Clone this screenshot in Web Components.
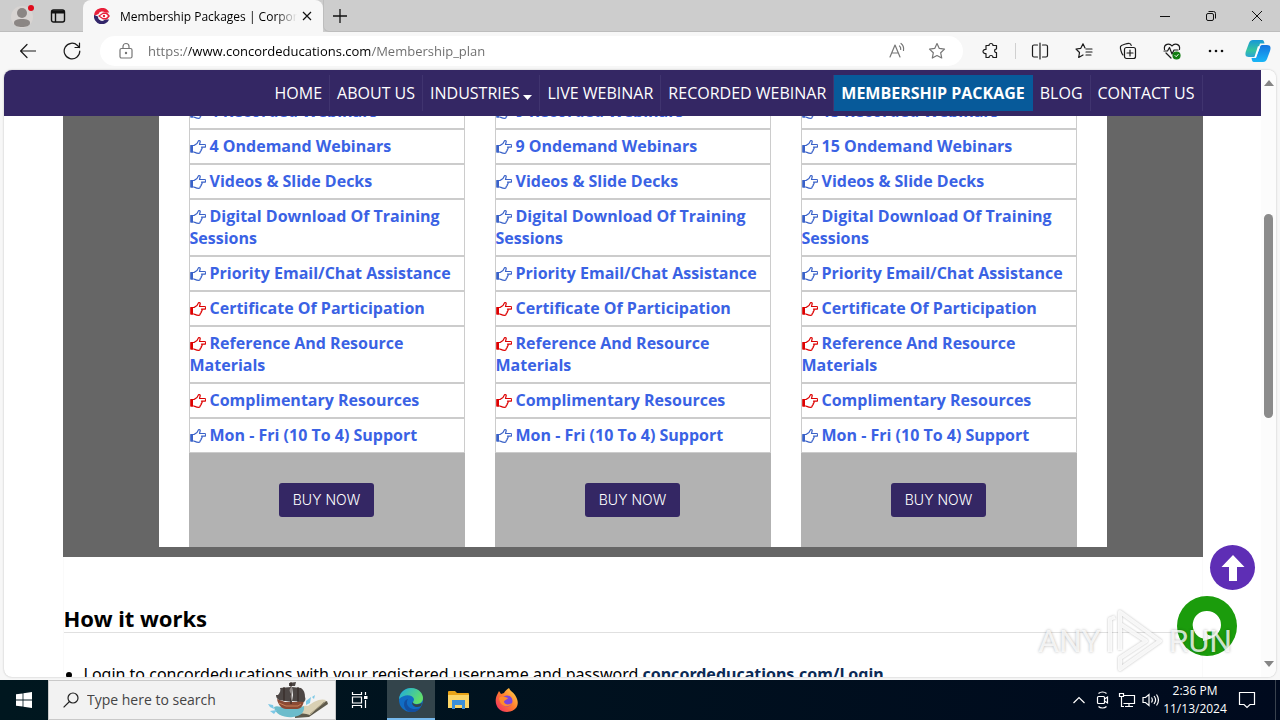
<!DOCTYPE html>
<html lang="en">
<head>
<meta charset="utf-8">
<title>Membership Packages | Corporate Training</title>
<style>
    body {
        margin: 0;
        font-family: "Open Sans", "Noto Sans", sans-serif;
        color: #000;
    }
</style>
</head>
<body>
<desktop-shell>
    <tab-strip slot="chrome">Membership Packages | Corporate Training</tab-strip>
    <address-bar slot="chrome" url="https://www.concordeducations.com/Membership_plan"></address-bar>
    <page-view slot="page">
        <site-nav slot="nav">
            <nav-item>HOME</nav-item>
            <nav-item>ABOUT US</nav-item>
            <nav-item caret>INDUSTRIES</nav-item>
            <nav-item>LIVE WEBINAR</nav-item>
            <nav-item>RECORDED WEBINAR</nav-item>
            <nav-item active>MEMBERSHIP PACKAGE</nav-item>
            <nav-item>BLOG</nav-item>
            <nav-item>CONTACT US</nav-item>
        </site-nav>
        <plan-board>
            <plan-card recorded="4" ondemand="4"></plan-card>
            <plan-card recorded="9" ondemand="9"></plan-card>
            <plan-card recorded="15" ondemand="15"></plan-card>
        </plan-board>
        <how-it-works></how-it-works>
        <any-run slot="float"></any-run>
        <float-actions slot="float"></float-actions>
    </page-view>
    <task-bar slot="taskbar"></task-bar>
</desktop-shell>

<script>
function define(name, html, setup) {
  const template = document.createElement("template");
  template.innerHTML = html;
  customElements.define(name, class extends HTMLElement {
    constructor() {
      super();
      this.attachShadow({ mode: "open" });
      this.shadowRoot.appendChild(template.content.cloneNode(true));
    }
    connectedCallback() {
      if (setup) setup(this, this.shadowRoot);
    }
  });
}

define("desktop-shell", `
<style>
    :host {
        display: flex;
        flex-direction: column;
        height: 100vh;
        overflow: hidden;
        background: #f7f7f7;
    }
    main {
        flex: 1;
        min-height: 0;
        display: flex;
        padding: 0 4px 3px;
    }
</style>
<slot name="chrome"></slot>
<main><slot name="page"></slot></main>
<slot name="taskbar"></slot>
`);

define("tab-strip", `
<style>
    :host {
        display: flex;
        height: 32px;
        background: #cdcdcd;
        font-size: 12px;
    }
    button {
        border: 0;
        padding: 0;
        background: none;
        display: grid;
        place-items: center;
    }
    svg {
        display: block;
        fill: none;
        stroke: #111;
    }
    .left {
        display: flex;
        align-items: center;
        width: 83px;
        gap: 14px;
        padding-left: 10px;
        box-sizing: border-box;
        border-bottom: 1px solid #bdbdbd;
    }
    .tab {
        display: flex;
        align-items: center;
        width: 240px;
        box-sizing: border-box;
        padding: 0 8px 0 11px;
        background: #f7f7f7;
        border-radius: 8px 8px 0 0;
    }
    .title {
        flex: 1;
        min-width: 0;
        margin: 0 2px 0 10px;
        overflow: hidden;
        white-space: nowrap;
        -webkit-mask-image: linear-gradient(90deg, #000 88%, transparent);
    }
    .rest {
        flex: 1;
        display: flex;
        padding-left: 6px;
        border-bottom: 1px solid #bdbdbd;
        border-left: 1px solid #bdbdbd;
        border-radius: 0 0 0 6px;
    }
    .rest .plus { width: 20px; }
    .windows {
        margin-left: auto;
        display: flex;
    }
    .windows button { width: 46px; }
</style>
<div class="left">
    <button aria-label="Profile">
        <svg width="26" height="28" viewBox="0 0 26 28" style="stroke:none">
            <circle cx="12" cy="15" r="11" fill="#d8d4d2"/>
            <circle cx="12" cy="11" r="5" fill="#8b8684"/>
            <path d="M4 21c0-3 3-4 8-4s8 1 8 4-4 4-8 4-8-1-8-4z" fill="#8b8684"/>
            <circle cx="21" cy="6" r="3" fill="#e00b1c"/>
        </svg>
    </button>
    <button aria-label="Tab actions">
        <svg width="16" height="16" viewBox="0 0 16 16" stroke-width="1.4">
            <rect x="1.5" y="2" width="13" height="12" rx="2"/>
            <path d="M2 4h12" stroke-width="3"/><path d="M5.5 5v9"/>
        </svg>
    </button>
</div>
<div class="tab">
    <svg width="16" height="16" viewBox="0 0 16 16" style="stroke:none">
        <path d="M0 8A8 8 0 0 1 15.200 4.500H11A4 4 0 0 0 4.500 6z" fill="#e8203a"/>
        <path d="M0 7l4 1.500a4 4 0 0 0 7 3h4.200A8 8 0 0 1 0 7z" fill="#32266a"/>
        <path d="M4 8l5-3.500h4l3 3.500-3 3.500H9z" fill="#e8203a"/>
        <path d="M6 8l3-2h3l2 2-2 2H9z" fill="#fff"/><circle cx="10" cy="8" r="1.200" fill="#e8203a"/>
    </svg>
    <span class="title"><slot></slot></span>
    <button aria-label="Close tab">
        <svg width="16" height="16" viewBox="0 0 16 16" stroke-width="1.2"><path d="M4 4l8 8M12 4l-8 8"/></svg>
    </button>
</div>
<div class="rest">
    <button class="plus" aria-label="New tab">
        <svg width="16" height="16" viewBox="0 0 16 16" stroke-width="1.3"><path d="M1 8h14M8 1v14"/></svg>
    </button>
    <div class="windows">
        <button aria-label="Minimize"><svg width="12" height="12" viewBox="0 0 12 12"><path d="M1 6.5h10"/></svg></button>
        <button aria-label="Restore"><svg width="12" height="12" viewBox="0 0 12 12"><rect x="1.5" y="3.5" width="7" height="7" rx="1.5"/><path d="M3.5 1.5h5a2 2 0 0 1 2 2v5"/></svg></button>
        <button aria-label="Close"><svg width="12" height="12" viewBox="0 0 12 12"><path d="M1 1l10 10M11 1L1 11"/></svg></button>
    </div>
</div>
`);

define("address-bar", `
<style>
    :host {
        display: flex;
        align-items: center;
        height: 38px;
        background: #f7f7f7;
    }
    button {
        border: 0;
        padding: 0;
        background: none;
        display: grid;
        place-items: center;
        width: 44px;
        height: 32px;
    }
    svg {
        display: block;
        fill: none;
        stroke: #1b1b1b;
        stroke-width: 1.2;
        stroke-linejoin: round;
        stroke-linecap: round;
    }
    .nav {
        display: flex;
        padding: 0 6px;
    }
    .field {
        flex: 1;
        display: flex;
        align-items: center;
        height: 30px;
        border-radius: 15px;
        background: #fff;
        padding: 0 6px 0 18px;
        gap: 14px;
    }
    .field svg { stroke: #767676; }
    .field button { width: 40px; margin-left: -14px; }
    input {
        flex: 1;
        min-width: 0;
        border: 0;
        outline: 0;
        padding: 0;
        font: 13px/20px "Open Sans", "Noto Sans", sans-serif;
        color: #111;
        /* scheme and path are grey, the host is black */
        background: linear-gradient(90deg, #6b6b6b 41px, #000 41px, #000 223px, #6b6b6b 223px);
        -webkit-background-clip: text;
        background-clip: text;
        -webkit-text-fill-color: transparent;
    }
    .tools {
        display: flex;
        align-items: center;
        padding: 0 2px 0 6px;
    }
    .tools button { width: 44px; }
    .tools i {
        width: 1px;
        height: 16px;
        margin: 0 2px;
        background: #d0d0d0;
    }
    .tools button.copilot { width: 40px; }
</style>
<div class="nav">
    <button aria-label="Back"><svg width="16" height="16" viewBox="0 0 16 16"><path d="M15.5 8H.8M7 1.500L.6 8 7 14.500"/></svg></button>
    <button aria-label="Refresh"><svg width="18" height="18" viewBox="0 0 18 18"><path d="M16.800 9A7.800 7.800 0 1 1 14.500 3.500L16.500 5.500M16.500 1v4.500H12"/></svg></button>
</div>
<div class="field">
    <svg width="16" height="18" viewBox="0 0 16 18"><rect x="2" y="6.5" width="12" height="9.5" rx="1.5"/><path d="M5 6.500V4.500a3 3 0 0 1 6 0v2"/><circle cx="8" cy="11" r=".6"/></svg>
    <input type="text" aria-label="Address" spellcheck="false">
    <button aria-label="Read aloud"><svg width="18" height="18" viewBox="0 0 18 18"><path d="M2 15L7 3l5 12M4 11h6.500M11.500 4c1 .8 1.400 2 1.200 3.500M13 1.500c2 1.500 3 4 2.500 7"/></svg></button>
    <button aria-label="Favorite"><svg width="18" height="18" viewBox="0 0 18 18"><path d="M9 1.500l2.300 4.900 5.200.7-3.800 3.700 1 5.200L9 13.500 4.300 16l1-5.200L1.500 7.100l5.200-.7z"/></svg></button>
</div>
<div class="tools">
    <button aria-label="Extensions"><svg width="18" height="18" viewBox="0 0 18 18"><path d="M4 3.500h3a2 2 0 0 1 4 0h3.500V7c-2.500-.3-2.500 4 0 3.700v4.800H11a2 2 0 0 0-4 0H4v-4c-4 .5-4-4.500 0-4z"/></svg></button>
    <i></i>
    <button aria-label="Split screen"><svg width="18" height="18" viewBox="0 0 18 18"><path d="M6.500 3H3a1.500 1.500 0 0 0-1.500 1.500v9A1.500 1.500 0 0 0 3 15h3.500M11.500 3H15a1.500 1.500 0 0 1 1.500 1.500v9A1.500 1.500 0 0 1 15 15h-3.500M9 1v16"/></svg></button>
    <button aria-label="Favorites"><svg width="18" height="18" viewBox="0 0 18 18"><path d="M10 6L8 1.800 5.800 6.300 1 7l3.500 3.500-.8 5L8 13M11 7h6M11 10h6M11 13h5"/></svg></button>
    <button aria-label="Collections"><svg width="18" height="18" viewBox="0 0 18 18"><rect x="5.5" y="5.5" width="11" height="11" rx="2"/><path d="M11 8v6M8 11h6M4 13c-1.500-1-3-7-2.500-8.500C2 3 9 1 10.500 1.500c1 .3 1.500 1 1.700 2"/></svg></button>
    <button aria-label="Browser essentials"><svg width="18" height="18" viewBox="0 0 18 18"><path d="M1.500 7.500C.5 2 6.500.5 9 4c2.500-3.500 8.500-2 7.500 3.500M3 11l5 5M1 9h3.500l2-3.500L9 12l2-4h4"/><circle cx="13.5" cy="13.5" r="3.5" fill="#107c10" stroke="#107c10"/><path d="M12 13.500l1.200 1.200 2-2.200" stroke="#fff" stroke-width="1"/></svg></button>
    <button aria-label="More"><svg width="18" height="18" viewBox="0 0 18 18" style="fill:#111;stroke:none"><circle cx="3" cy="9" r="1.3"/><circle cx="9" cy="9" r="1.3"/><circle cx="15" cy="9" r="1.3"/></svg></button>
    <button class="copilot" aria-label="Copilot">
        <svg width="26" height="24" viewBox="0 0 26 24" style="stroke:none">
            <defs>
                <linearGradient id="a" x2="0" y2="1"><stop offset="0" stop-color="#1797d8"/><stop offset=".6" stop-color="#35c4a0"/><stop offset="1" stop-color="#2aa4d6"/></linearGradient>
                <linearGradient id="b" x2="0" y2="1"><stop offset="0" stop-color="#1474e0"/><stop offset="1" stop-color="#19b6f6"/></linearGradient>
            </defs>
            <path d="M8 1h9c2 0 2 2 2.500 3.500H15L11 16c-.6 1.500-1 2-3 2H4c-4 0-4-3-3-6L4 4c.8-2 2-3 4-3z" fill="url(#a)"/>
            <path d="M18 23H9c-2 0-2-2-2.500-4H11l4-11c.6-1.500 1-2 3-2h4c4 0 4 3 3 6l-3 8c-.8 2-2 3-4 3z" fill="url(#b)"/>
            <path d="M15 8l-4 10h-1.500L13 7z" fill="#fff"/>
        </svg>
    </button>
</div>
`, (host, root) => {
  root.querySelector("input").value = host.getAttribute("url");
});

define("page-view", `
<style>
    :host {
        flex: 1;
        min-width: 0;
        display: flex;
        position: relative;
        overflow: hidden;
        background: #fff;
        border-radius: 8px;
        box-shadow: 0 0 2px #b5b5b5;
    }
    .page {
        flex: 1;
        min-width: 0;
        position: relative;
    }
    .nav {
        position: absolute;
        inset: 0 0 auto;
    }
    .scroll {
        width: 15px;
        display: flex;
        flex-direction: column;
        align-items: center;
        justify-content: space-between;
        background: #fcfcfc;
        padding: 10px 0;
        box-sizing: border-box;
    }
    .thumb {
        width: 9px;
        height: 204px;
        margin-bottom: 116px;
        border-radius: 5px;
        background: #8b8b8b;
    }
    svg { fill: #858585; display: block; }
</style>
<div class="page">
    <slot></slot>
    <div class="nav"><slot name="nav"></slot></div>
</div>
<div class="scroll">
    <svg width="10" height="6" viewBox="0 0 10 6"><path d="M0 6l5-6 5 6z"/></svg>
    <div class="thumb"></div>
    <svg width="10" height="6" viewBox="0 0 10 6"><path d="M0 0l5 6 5-6z"/></svg>
</div>
<slot name="float"></slot>
`);

define("site-nav", `
<style>
    :host {
        display: block;
        background: #342764;
        color: #fff;
    }
    nav {
        display: flex;
        justify-content: flex-end;
        max-width: 1140px;
        margin: 0 auto;
        padding: 5px 0;
    }
</style>
<nav><slot></slot></nav>
`);

define("nav-item", `
<style>
    :host { display: block; }
    a {
        display: flex;
        align-items: center;
        gap: 4px;
        height: 36px;
        padding: 0 7px;
        border-right: 1px solid #40346f;
        color: #fff;
        font-size: 16px;
        white-space: nowrap;
        text-decoration: none;
    }
    svg { display: none; fill: #fff; margin-top: 8px; }
    :host([caret]) svg { display: block; }
    :host([active]) a {
        background: #075a9a;
        border-color: #075a9a;
        font-weight: 700;
    }
</style>
<a href="#"><slot></slot><svg width="9" height="5" viewBox="0 0 9 5"><path d="M0 0h9L4.500 5z"/></svg></a>
`);

define("plan-board", `
<style>
    :host {
        display: block;
        max-width: 1140px;
        margin: 0 auto;
        padding: 0 96px 10px;
        box-sizing: border-box;
        background: #666;
    }
    .columns {
        display: grid;
        grid-template-columns: repeat(3, 1fr);
        gap: 30px;
        padding: 24px 30px 0;
        background: #fff;
    }
</style>
<div class="columns"><slot></slot></div>
`);

define("plan-card", `
<style>
    :host { display: block; }
    ul {
        list-style: none;
        margin: 0;
        padding: 0;
    }
    li {
        border: 1px solid #ccc;
        padding: 5px 0 6px;
        color: #3a62e4;
        font-size: 16px;
        font-weight: 700;
        line-height: 22px;
    }
    svg {
        width: 16px;
        height: 14px;
        vertical-align: -2px;
        margin-right: 4px;
        fill: none;
        stroke: #3a62c8;
        stroke-width: 1.2;
        stroke-linejoin: round;
    }
    .red svg { stroke: #d00; }
    svg .cuff { fill: #3a62c8; stroke: none; }
    .red svg .cuff { fill: #d00; }
    .buy {
        display: flex;
        justify-content: center;
        padding: 30px 0;
        background: #b2b2b2;
    }
    button {
        height: 34px;
        padding: 0 14px;
        border: 0;
        border-radius: 3px;
        background: #342764;
        color: #fff;
        font: 300 14px/20px "Inter", "Open Sans", sans-serif;
    }
</style>
<ul></ul>
<div class="buy"><button>BUY NOW</button></div>
`, (host, root) => {
  const hand = `<svg viewBox="0 0 16 14"><path d="M1 5.500h3l3-2L8.500.8c1-.6 2 .2 1.600 1.400L9.500 4.500H14.500a1.200 1.200 0 0 1 0 2.600H11.500c1 .8.700 2-.3 2.400.3 1-.2 1.700-1 2 .1 1-.5 1.800-1.500 1.800-2 0-3-.6-4.700-1.300H1z"/><path class="cuff" d="M.5 5H3v7.500H.5z"/></svg>`;
  const rows = [
    [host.getAttribute("recorded") + " Recorded Webinars"],
    [host.getAttribute("ondemand") + " Ondemand Webinars"],
    ["Videos &amp; Slide Decks"],
    ["Digital Download Of Training Sessions"],
    ["Priority Email/Chat Assistance"],
    ["Certificate Of Participation", "red"],
    ["Reference And Resource Materials", "red"],
    ["Complimentary Resources", "red"],
    ["Mon - Fri (10 To 4) Support"]
  ];
  root.querySelector("ul").innerHTML = rows
    .map(([text, tone]) => `<li class="${tone || ""}">${hand}${text}</li>`)
    .join("");
});

define("how-it-works", `
<style>
    :host {
        display: block;
        max-width: 1140px;
        margin: 0 auto;
        padding-top: 48px;
        box-sizing: border-box;
        border: solid #fafafa;
        border-width: 0 1px;
        font-family: "Noto Sans", "Open Sans", sans-serif;
    }
    h2 {
        margin: 0 0 30px;
        border-bottom: 1px solid #e0e0e0;
        font-size: 22px;
        line-height: 27px;
    }
    ul {
        margin: 0;
        padding-left: 20px;
        font-size: 16px;
        line-height: 22px;
    }
    a {
        color: #0b2a55;
        font-weight: 700;
        text-decoration: none;
    }
</style>
<h2>How it works</h2>
<ul>
    <li>Login to concordeducations with your registered username and password <a href="#">concordeducations.com/Login</a></li>
</ul>
`);

define("float-actions", `
<style>
    /* sits over the page, in its lower right corner */
    :host {
        position: absolute;
        right: 21px;
        bottom: 21px;
        display: flex;
        flex-direction: column;
        align-items: flex-end;
        gap: 6px;
    }
    button {
        border: 0;
        padding: 0;
        border-radius: 50%;
        display: grid;
        place-items: center;
    }
    .up {
        width: 45px;
        height: 45px;
        background: #5e2eb5;
    }
    .chat {
        width: 60px;
        height: 60px;
        margin-right: 18px;
        background: #1b9c0c;
    }
    svg { display: block; fill: #fff; }
</style>
<button class="up" aria-label="Back to top"><svg width="24" height="26" viewBox="0 0 24 26"><path d="M12 0l11.500 12H16v14H8V12H.5z"/></svg></button>
<button class="chat" aria-label="Chat"><svg width="30" height="32" viewBox="0 0 30 32"><path d="M15 1a14 14 0 0 1 14 14c0 7-6 11.500-10 13.500L11 31v-2.500A14 14 0 0 1 15 1z"/><path d="M14 21.500h10a5 4 0 0 1-10 0z" fill="#1b9c0c"/></svg></button>
`);

define("any-run", `
<style>
    /* translucent mark over the page */
    :host {
        position: absolute;
        right: 44px;
        bottom: 2px;
        z-index: 1;
        display: flex;
        align-items: center;
        gap: 5px;
        font: 32px/68px "Roboto", sans-serif;
        color: rgba(255, 255, 255, 0.8);
        text-shadow: 0 0 3px rgba(0, 0, 0, 0.3);
        pointer-events: none;
    }
    svg {
        display: block;
        fill: none;
        stroke: rgba(255, 255, 255, 0.85);
        stroke-width: 4;
        stroke-linejoin: round;
        filter: drop-shadow(0 0 1px rgba(0, 0, 0, 0.3));
    }
</style>
<span>ANY</span>
<svg width="58" height="66" viewBox="0 0 58 66"><path d="M4 44V11l5-2M14 42V4l40 29-40 28V50l26-17-26-17"/></svg>
<span>RUN</span>
`);

define("task-bar", `
<style>
    :host {
        display: flex;
        height: 40px;
        background: linear-gradient(90deg, #00171f, #000a1e);
        color: #fff;
    }
    button {
        border: 0;
        padding: 0;
        width: 48px;
        background: none;
        display: grid;
        place-items: center;
    }
    svg {
        display: block;
        fill: none;
        stroke: #fff;
        stroke-width: 1.2;
    }
    .search {
        display: flex;
        align-items: center;
        gap: 8px;
        width: 288px;
        box-sizing: border-box;
        padding: 0 6px 0 14px;
        background: #f2f2f2;
        border: 1px solid #c9c9c9;
    }
    .search svg { flex: none; stroke: #222; }
    input {
        flex: 1;
        min-width: 0;
        border: 0;
        outline: 0;
        padding: 0;
        background: none;
        font: 14px/20px "Open Sans", "Noto Sans", sans-serif;
    }
    input::placeholder { color: #444; opacity: 1; }
    .task { margin-left: 3px; }
    .open {
        background: #33444b;
        box-shadow: inset 0 -2px #76b9ed;
    }
    .tray {
        margin-left: auto;
        display: flex;
        align-items: center;
    }
    .tray button { width: 24px; height: 40px; }
    .clock {
        width: 64px;
        text-align: center;
        font-size: 12px;
        line-height: 18px;
    }
    .tray .note { width: 40px; }
    .tray i {
        align-self: stretch;
        width: 1px;
        margin: 0 4px 0 8px;
        background: #39424e;
    }
</style>
<button aria-label="Start"><svg width="16" height="16" viewBox="0 0 16 16" style="fill:#fff;stroke:none"><path d="M0 2.300L6.600 1.400v6.200H0zM7.400 1.300L16 0v7.600H7.400zM0 8.400h6.600v6.200L0 13.700zM7.400 8.400H16V16l-8.600-1.300z"/></svg></button>
<label class="search">
    <svg width="16" height="16" viewBox="0 0 16 16"><circle cx="10" cy="6" r="5"/><path d="M6.500 9.500L.6 15.400"/></svg>
    <input type="text" placeholder="Type here to search" aria-label="Search">
    <svg width="62" height="36" viewBox="0 0 62 36" style="stroke:none">
        <path d="M28 33l14-8 18-6 1 3-19 13-14 1z" fill="#5e5a4c"/>
        <path d="M28 31c5-6 9-8 13-7 5-4 12-8 18-6L43 33c-5-2-9-1-15-2z" fill="#d9d0b4"/>
        <path d="M43 32l16-13" stroke="#a79d80" stroke-width="1"/>
        <path d="M7 25c4-2 7 1 12 0s14 1 18-1c1 6-3 10-11 11S8 33 7 25z" fill="#6cbccb"/>
        <path d="M1 22l5 1 1 4-4-2zM3 29l7-1-3 4zM39 19l5-4-1 6-4 2zM45 15l3-2-1 4z" fill="#7cc8e6"/>
        <path d="M10 17l8 3h12l7-3c0 6-3 10-7 10H19c-4 0-8-4-9-10z" fill="#8b4a34"/>
        <path d="M12 21l7 3h12l3-2" stroke="#c98259" stroke-width="1"/>
        <path d="M13 6l11-1c-2 3-1 5 0 7l-13 1c2-2 3-5 2-7zM25 5l9 1c3 2 4 5 4 9l-12-2zM9 13l15-1c-1 3 0 5 1 8l-13-2c-2-1-3-3-3-5zM26 13l12 2c1 2 0 4-1 5l-12-1zM22 1l7-1-1 4h-6z" fill="#4d4745"/>
        <path d="M24 0v22M31 5v15M17 5v14" stroke="#302521" stroke-width="1"/>
    </svg>
</label>
<button aria-label="Task view"><svg width="18" height="16" viewBox="0 0 18 16"><path d="M1.500 0v2.500h9V0M1.500 16v-2.500h9V16M1.500 5h9v6h-9zM14.500 0v3M14.500 8v8"/><path d="M13 4h3.500v3H13z" fill="#fff" stroke="none"/></svg></button>
<button class="task open" aria-label="Microsoft Edge">
    <svg width="24" height="24" viewBox="0 0 24 24" style="stroke:none">
        <defs><linearGradient id="e" y2=".5"><stop offset="0" stop-color="#1ba9e4"/><stop offset="1" stop-color="#62df69"/></linearGradient></defs>
        <circle cx="12" cy="12" r="12" fill="#116cc4"/>
        <path d="M0 11C1 4 6 0 12 0c8 0 12 6 12 10 0 5-4 6-7 6-2 0-3-1-3-2 0 0 1-1 1-3C14 7 6 5 0 11z" fill="url(#e)"/>
        <path d="M9 11c-3 4 0 10 7 10 3 0 5-1 6-2-3 5-8 6-11 5-7-2-8-12-2-13z" fill="#134fa0"/>
        <path d="M13 14c2 3 6 3 10 1l-1 3c-4 2-9 1-9-4z" fill="#33444b"/>
    </svg>
</button>
<button aria-label="File Explorer"><svg width="22" height="20" viewBox="0 0 22 20" style="stroke:none"><path d="M0 2a1 1 0 0 1 1-1h6l2 2h11a1 1 0 0 1 1 1v4H0z" fill="#e8a317"/><path d="M0 5h21v13H0z" fill="#fbd567"/><path d="M4 10h13v9h-3v-4H7v4H4z" fill="#3b8fd8"/></svg></button>
<button aria-label="Firefox">
    <svg width="24" height="24" viewBox="0 0 24 24" style="stroke:none">
        <defs><linearGradient id="f" x1="1" x2="0" y2="1"><stop offset="0" stop-color="#ffe14d"/><stop offset=".5" stop-color="#ff7a2d"/><stop offset="1" stop-color="#f0246a"/></linearGradient></defs>
        <path d="M14 0c1 3 4 4 6 7 4 6 3 10 1 13-4 5-13 5-17 1C0 17 0 11 2 7l2-4 2 3 3-1c1-2 3-4 5-5z" fill="url(#f)"/>
        <circle cx="12" cy="13" r="5.5" fill="#7b44dd"/>
        <path d="M4 10c3-3 6-1 9 0-1 2-4 2-4 4 1 3 5 3 8 1-2 5-12 5-13-5z" fill="#ff8b2c"/>
    </svg>
</button>
<div class="tray">
    <button aria-label="Hidden icons"><svg width="12" height="8" viewBox="0 0 12 8"><path d="M.5 7L6 1.500 11.500 7"/></svg></button>
    <button aria-label="Meet now"><svg width="14" height="18" viewBox="0 0 14 18"><rect x="1.5" y="5.5" width="7" height="7" rx="1"/><path d="M8.500 8l3-2v6l-3-2M2.500 2.500c2-2 6-2 8 0M2.500 15.500c2 2 6 2 8 0"/></svg></button>
    <button aria-label="Network"><svg width="18" height="16" viewBox="0 0 18 16"><path d="M5.500 3.500h11v8h-11M11 11.500v3M7 14.500h8M1.500 1.500h4v3h-4zM3.500 4.500v10H6"/></svg></button>
    <button aria-label="Volume"><svg width="18" height="16" viewBox="0 0 18 16"><path d="M1 5.500h2.500L7 2.500v11l-3.500-3H1zM9.500 5.500c1 1.500 1 3.500 0 5M12 4c2 2.500 2 5.500 0 8M14.500 2.500c2.500 3.500 2.500 7.500 0 11"/></svg></button>
    <div class="clock"><div>2:36 PM</div><div>11/13/2024</div></div>
    <button class="note" aria-label="Notifications"><svg width="18" height="18" viewBox="0 0 18 18"><path d="M1.500 1.500h15v12H12l-3 3-3-3H1.500z"/></svg></button>
    <i></i>
</div>
`);
</script>
</body>
</html>
